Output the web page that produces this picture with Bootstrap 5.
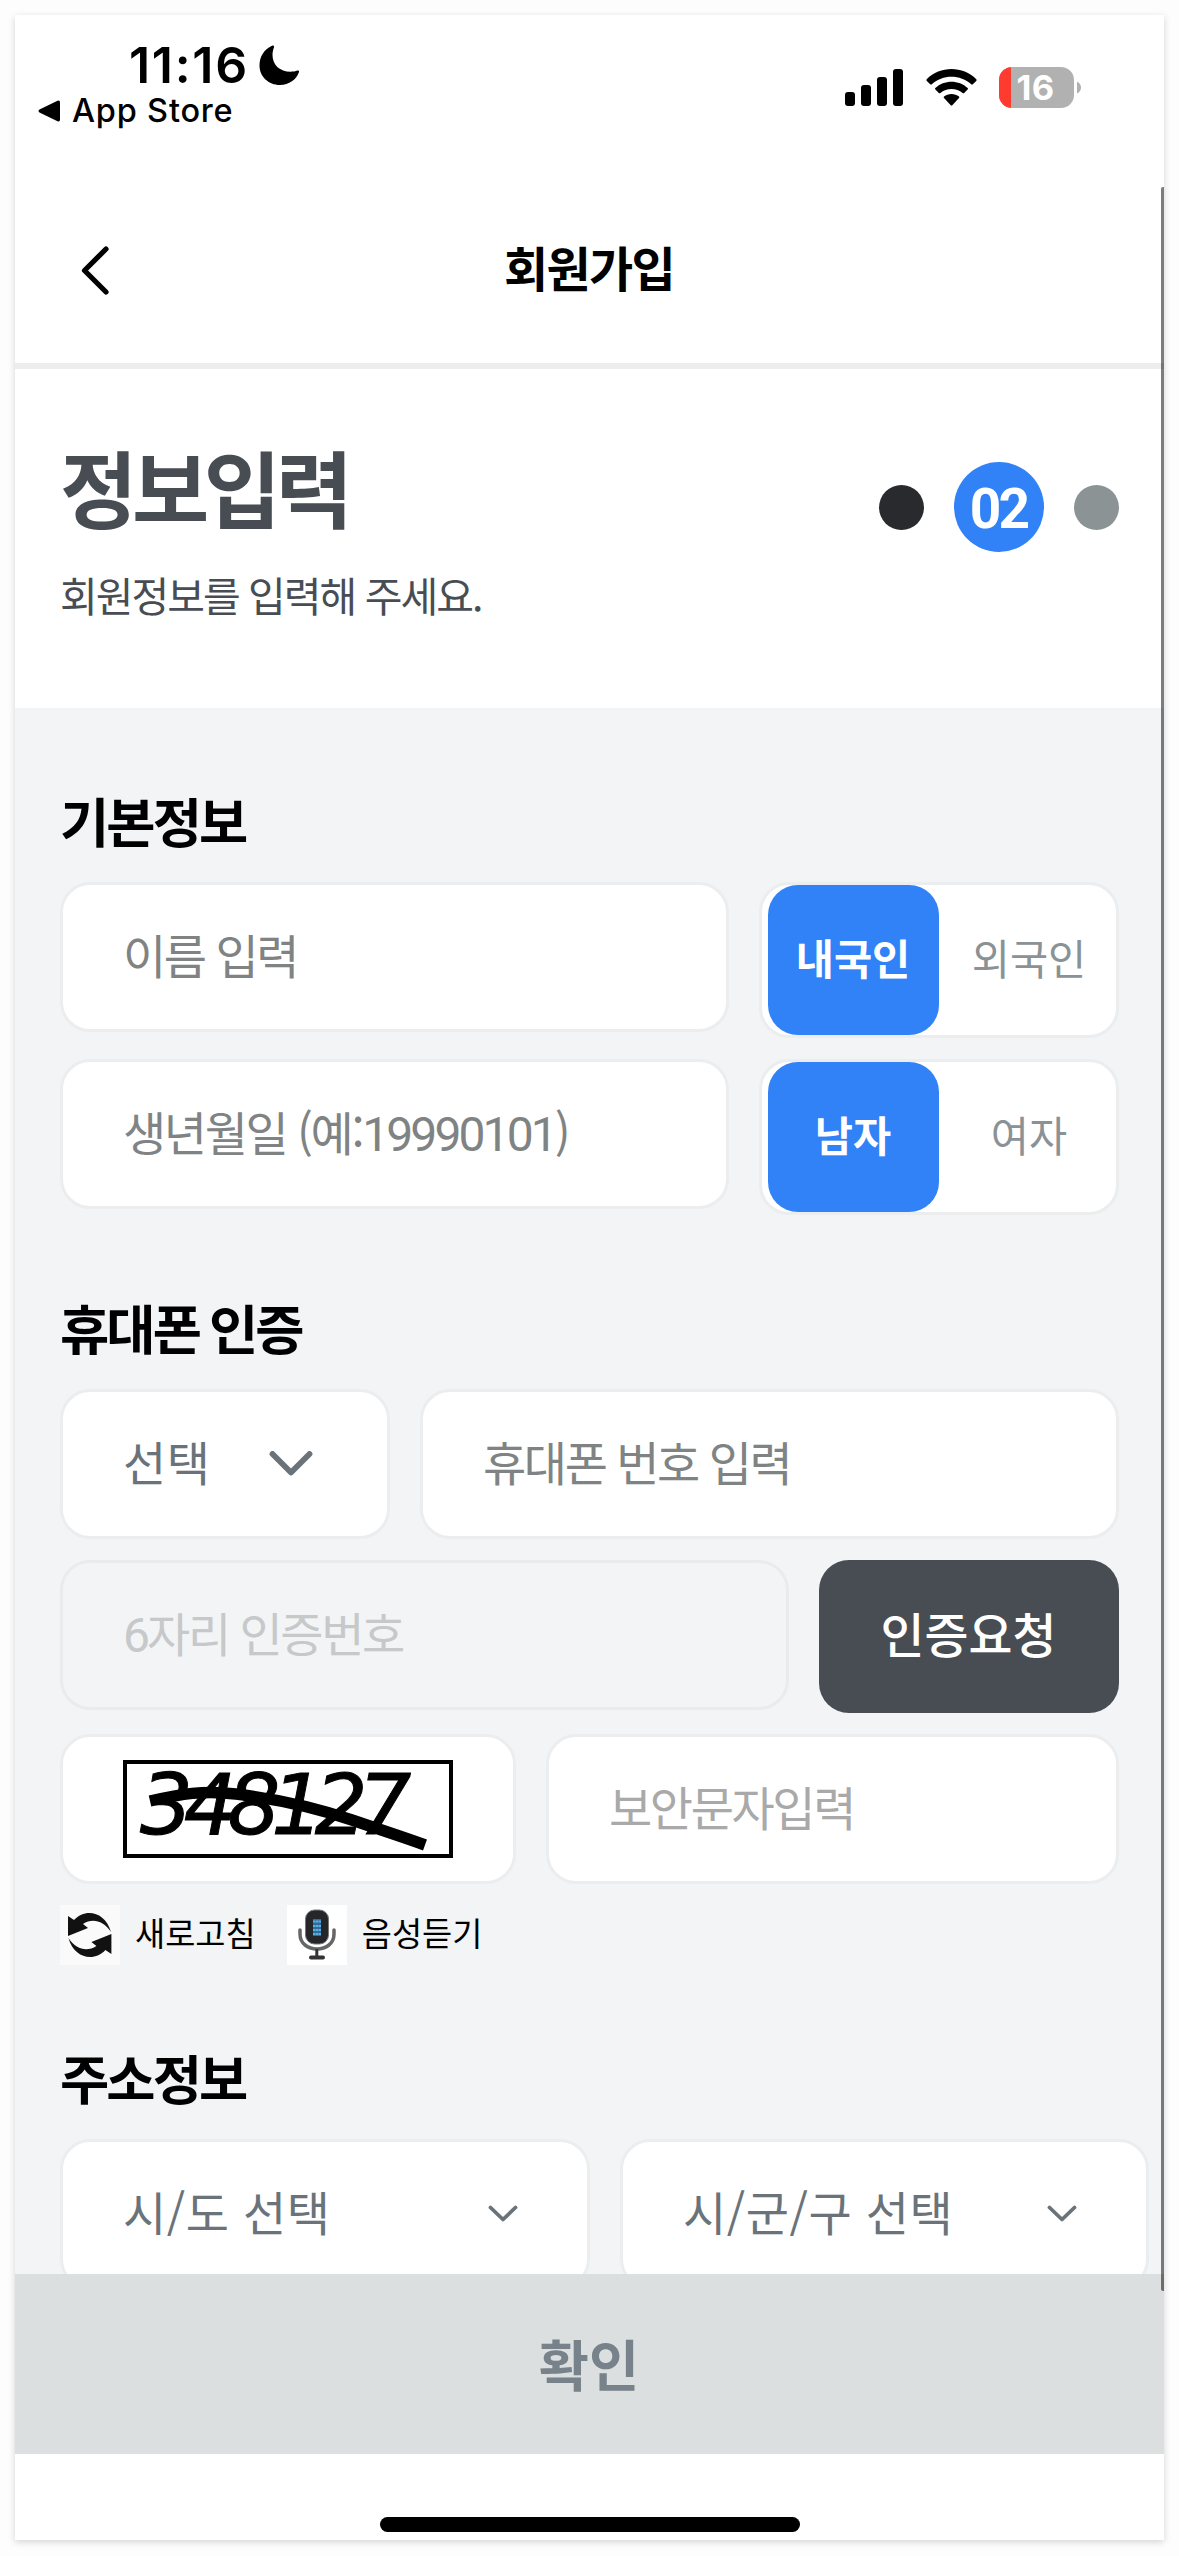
<!DOCTYPE html>
<html lang="ko">
<head>
<meta charset="utf-8">
<meta name="viewport" content="width=device-width, initial-scale=1">
<title>회원가입</title>
<link href="https://cdn.jsdelivr.net/npm/bootstrap@5.3.0/dist/css/bootstrap.min.css" rel="stylesheet">
<style>
  body { background: #fdfdfd; font-family: "Noto Sans CJK KR", sans-serif; color: #000; height: 2556px; overflow: hidden; padding: 15px; }
  .phone { width: 1149px; height: 2525px; background: #fff; box-shadow: 0 2px 7px rgba(0,0,0,.17); line-height: 1; }
  .ui-font { font-family: Inter, sans-serif; }
  .num { font-family: Roboto, sans-serif; font-size: 48px; line-height: 1; letter-spacing: -2.9px; }
  .status { height: 172px; padding: 28px 83px 0 23px; }
  .clock { font-size: 50px; font-weight: 600; letter-spacing: 1.7px; line-height: 44px; padding-left: 91px; gap: 10px; }
  .back-app { font-size: 32.5px; font-weight: 500; letter-spacing: .8px; line-height: 34px; gap: 11px; padding-top: 7px; }
  .indicators { gap: 22px; padding-top: 24px; }
  .topbar { height: 176px; padding: 0 67px 0 66px; }
  .topbar-title { font-size: 48px; font-weight: 700; letter-spacing: -1.7px; padding-bottom: 18px; }
  .topline { height: 6px; background: #ebedef; }
  .intro { height: 339px; padding: 72px 45px 0 45px; color: #484d54; }
  .intro-title { font-size: 84px; font-weight: 700; letter-spacing: -5.4px; line-height: 90px; margin: 0 0 41px; }
  .intro-sub { font-size: 41px; letter-spacing: -2px; line-height: 44px; }
  .steps { gap: 30px; padding-top: 21px; height: 111px; }
  .dot { width: 45px; height: 45px; }
  .step-now { width: 90px; height: 90px; background: #3182f7; color: #fff; font-family: Roboto, sans-serif; font-size: 55px; font-weight: 700; letter-spacing: -2.9px; padding: 4px 1px 0 0; }
  .form-area { height: 1566px; background: #f2f4f6; padding: 0 45px; overflow: hidden; }
  .sec-title { font-size: 53.5px; font-weight: 700; letter-spacing: -2.9px; word-spacing: -2px; line-height: 60px; margin: 0 0 32px; padding-top: 82px; }
  .field { height: 150px; border: 3px solid #ebedee; border-radius: 30px; background: #fff; padding: 0 62px 7px 60px; font-size: 47px; letter-spacing: -2.4px; color: #808383; white-space: nowrap; }
  .field-num { padding-bottom: 3px; }
  .field-select { letter-spacing: .5px; color: #6a737a; }
  .field-off { background: transparent; border-color: #e9ebec; color: #c6c8c9; }
  .seg { width: 360px; height: 156px; border: 3px solid #ebedee; border-radius: 30px; background: #fff; padding: 0 0 0 6px; gap: 5px; }
  .seg .btn { width: 171px; height: 150px; border: 0; border-radius: 30px; font-size: 41.5px; line-height: 1; padding: 0 1px 5px 0; color: #8a9296; }
  .seg .btn.active { background: #3182f7; color: #fff; font-weight: 700; }
  .btn-request { width: 300px; height: 153px; border: 0; border-radius: 30px; background: #484d54; color: #fff; font-size: 47.8px; font-weight: 500; line-height: 1; padding: 0 1px 8px 0; }
  .gap-col { gap: 30px; }
  .aid { font-size: 32.8px; gap: 15px; }
  .aid span { padding-bottom: 5px; }
  .confirm { height: 180px; border: 0; border-radius: 0; background: #dbdfdf; color: #78828a; font-size: 54.5px; font-weight: 700; padding: 0 1px 3px 0; }
  .home-bar { width: 420px; height: 15px; border-radius: 8px; background: #000; margin: 63px auto 0; }
  .scrollbar-thumb { position: absolute; top: 172px; right: 0; width: 3px; height: 2104px; border-radius: 2px 0 0 2px; background: rgba(0,0,0,.51); }
</style>
</head>
<body>
<div class="phone position-relative">
  <header class="status ui-font d-flex justify-content-between align-items-start">
    <div class="d-flex flex-column">
      <div class="clock d-flex align-items-center"><span>11:16</span>
        <svg width="41" height="41" viewBox="0 0 41 41"><path d="M13 .8C5.500 4 .5 11.500.5 20.500C.5 31.500 9.500 40 21 40C30 40 37.500 34.500 40 27C40.300 26 39.500 25.200 38.500 25.600C36.500 26.400 34 26.800 31.500 26.800C21 26.800 13.500 20 13.500 10C13.500 7 14.200 4.500 15 2.300C15.500 1 14.500.2 13 .8Z"/></svg>
      </div>
      <div class="back-app d-flex align-items-center">
        <svg width="23" height="22" viewBox="0 0 23 22"><path d="M1.500 9.500L19.500.8Q22 0 22 2.500V19.500Q22 22 19.500 21.200L1.500 12.500Q-.5 11 1.500 9.500Z"/></svg>
        <span>App Store</span>
      </div>
    </div>
    <div class="indicators d-flex align-items-center">
      <svg width="59" height="37" viewBox="0 0 59 37"><rect x="0" y="23" width="10" height="14" rx="3"/><rect x="16" y="16" width="10" height="21" rx="3"/><rect x="32" y="8" width="10" height="29" rx="3"/><rect x="48" y="0" width="10" height="37" rx="3"/></svg>
      <svg width="51" height="37" viewBox="0 0 51 37"><path d="M.7 10.300C14-3.300 37-3.300 50.300 10.300Q51 11.200 50.200 12L46.800 15.300Q46 16 45.200 15.300C34.500 5.200 16.500 5.200 5.800 15.300Q5 16 4.200 15.300L.8 12Q0 11.200.7 10.300Z"/><path d="M9.300 19C18 10.500 33 10.500 41.700 19Q42.400 19.800 41.600 20.600L38.200 24Q37.400 24.700 36.600 24C30.500 18.600 20.500 18.600 14.400 24Q13.600 24.700 12.800 24L9.400 20.600Q8.600 19.800 9.300 19Z"/><path d="M18 27.600C22 24.100 29 24.100 33 27.600Q33.700 28.300 33 29.100L26.500 36Q25.500 37 24.500 36L18 29.100Q17.300 28.300 18 27.600Z"/></svg>
      <svg width="82" height="41" viewBox="0 0 82 41"><defs><clipPath id="cell"><rect width="75" height="41" rx="13"/></clipPath></defs><g clip-path="url(#cell)"><rect width="75" height="41" fill="#b1b1b1"/><rect width="12" height="41" fill="#ff3b30"/></g><path d="M78 14.500Q82 16.500 82 20.500T78 26.500Z" fill="#b1b1b1"/><text x="36.500" y="33" text-anchor="middle" font-family="Inter" font-size="34.500" font-weight="700" letter-spacing="0.300" fill="#fff">16</text></svg>
    </div>
  </header>

  <nav class="topbar d-flex align-items-center justify-content-between">
    <svg width="28" height="49" viewBox="0 0 28 49" fill="none" stroke="#000" stroke-width="5.200" stroke-linecap="round" stroke-linejoin="round" style="margin-bottom:10px"><path d="M25 3L3.500 24.500L25 46"/></svg>
    <div class="topbar-title">회원가입</div>
    <span style="width:28px"></span>
  </nav>
  <div class="topline"></div>

  <section class="intro d-flex justify-content-between align-items-start">
    <div>
      <h1 class="intro-title">정보입력</h1>
      <div class="intro-sub">회원정보를 입력해 주세요.</div>
    </div>
    <div class="steps d-flex align-items-center">
      <span class="dot rounded-circle" style="background:#292a2d"></span>
      <span class="step-now rounded-circle d-flex align-items-center justify-content-center">02</span>
      <span class="dot rounded-circle" style="background:#8b9394"></span>
    </div>
  </section>

  <main class="form-area">
    <h2 class="sec-title">기본정보</h2>
    <div class="d-flex gap-col align-items-start" style="height:177px">
      <div class="field d-flex align-items-center flex-fill">이름 입력</div>
      <div class="seg d-flex"><button class="btn active">내국인</button><button class="btn">외국인</button></div>
    </div>
    <div class="d-flex gap-col align-items-start" style="height:156px">
      <div class="field field-num d-flex align-items-center flex-fill"><div>생년월일 (예:<span class="num">19990101</span>)</div></div>
      <div class="seg d-flex"><button class="btn active">남자</button><button class="btn">여자</button></div>
    </div>

    <h2 class="sec-title">휴대폰 인증</h2>
    <div class="d-flex gap-col align-items-start" style="height:171px">
      <div class="field field-select d-flex align-items-center" style="width:330px"><span>선택</span>
        <svg class="ms-auto" style="margin:6px 12px 0 0" width="44" height="26" viewBox="0 0 44 26" fill="none" stroke="#6a737a" stroke-width="5.800" stroke-linecap="round" stroke-linejoin="round" ><path d="M3.500 3L22 21.500L40.500 3"/></svg>
      </div>
      <div class="field d-flex align-items-center flex-fill">휴대폰 번호 입력</div>
    </div>
    <div class="d-flex gap-col align-items-start" style="height:174px">
      <div class="field field-num field-off d-flex align-items-center flex-fill"><div><span class="num">6</span>자리 인증번호</div></div>
      <button class="btn btn-request">인증요청</button>
    </div>
    <div class="d-flex gap-col align-items-start" style="height:171px">
      <div class="field d-flex align-items-center" style="width:456px;padding:0 0 0 60px">
        <svg class="overflow-visible" width="330" height="98" viewBox="0 0 330 98"><rect x="2" y="2" width="326" height="94" fill="#fff" stroke="#000" stroke-width="4"/><text x="17" y="74" textLength="269" lengthAdjust="spacing" font-family="DejaVu Sans" font-style="italic" font-size="83" fill="#000" stroke="#000" stroke-width="1">348127</text><path d="M27 41C58 34 80 30 113 34S185 45 229 60S280 77 302 85" fill="none" stroke="#000" stroke-width="11.500"/></svg>
      </div>
      <div class="field d-flex align-items-center flex-fill" style="color:#a9a9a9">보안문자입력</div>
    </div>
    <div class="d-flex" style="gap:31px">
      <div class="aid d-flex align-items-center">
        <svg width="60" height="60" viewBox="0 0 60 60"><rect width="60" height="60" fill="#fafafa"/><path id="turn" d="M8 11L14 15C25 3 45 6 51 27C43 15 32 13 23 19L28 23L8 31Z" fill="#111"/><use href="#turn" transform="rotate(180 29.700 30)"/></svg>
        <span>새로고침</span>
      </div>
      <div class="aid d-flex align-items-center">
        <svg width="60" height="60" viewBox="0 0 60 60"><rect width="60" height="60" fill="#fff"/><path d="M13 25V29C13 49 47 49 47 29V25" fill="none" stroke="#666" stroke-width="3.500" stroke-linecap="round"/><rect x="18.500" y="5" width="23" height="34" rx="9" fill="#252629" stroke="#777" stroke-width="1"/><rect x="26" y="14" width="8" height="17" fill="#356b93"/><path d="M26 16.500H34M26 21H34M26 25H34M26 29H34" stroke="#55b3ea" stroke-width="2" stroke-dasharray="2.500 .5"/><path d="M29.800 44V51" stroke="#333" stroke-width="3"/><path d="M24 52.500H36" stroke="#333" stroke-width="4" stroke-linecap="round"/></svg>
        <span>음성듣기</span>
      </div>
    </div>

    <h2 class="sec-title">주소정보</h2>
    <div class="d-flex gap-col" style="width:1089px">
      <div class="field field-select d-flex align-items-center justify-content-between" style="width:530px"><span>시/도 선택</span>
        <svg style="margin:7px 7px 0 0" width="30" height="18" viewBox="0 0 30 18" fill="none" stroke="#6a737a" stroke-width="3.800" stroke-linecap="round" stroke-linejoin="round"><path d="M2.500 2.500L15 14.500L27.500 2.500"/></svg></div>
      <div class="field field-select d-flex align-items-center justify-content-between" style="width:529px"><span>시/군/구 선택</span>
        <svg style="margin:7px 7px 0 0" width="30" height="18" viewBox="0 0 30 18" fill="none" stroke="#6a737a" stroke-width="3.800" stroke-linecap="round" stroke-linejoin="round"><path d="M2.500 2.500L15 14.500L27.500 2.500"/></svg></div>
    </div>
  </main>
  <button class="btn confirm w-100 d-block">확인</button>
  <div class="home-bar"></div>
  <div class="scrollbar-thumb"></div>
</div>
<script src="https://cdn.jsdelivr.net/npm/bootstrap@5.3.0/dist/js/bootstrap.bundle.min.js"></script>
</body>
</html>
